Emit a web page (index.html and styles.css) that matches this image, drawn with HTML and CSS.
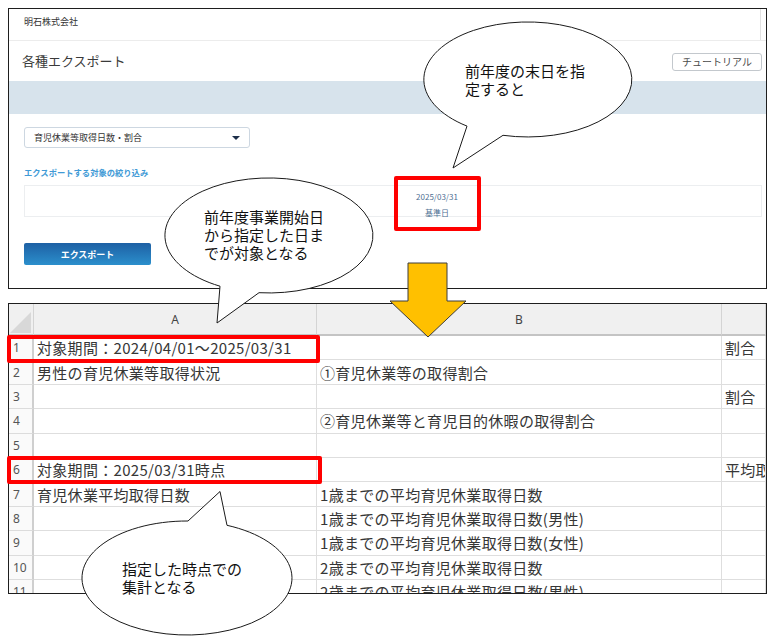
FILE: index.html
```html
<!DOCTYPE html>
<html lang="ja">
<head>
  <meta charset="UTF-8">
  <meta name="viewport" content="width=device-width, initial-scale=1.0">
  <title>各種エクスポート</title>
  <link rel="stylesheet" href="styles.css">
</head>
<body>
  <!-- export screen -->
  <section class="app">
    <div class="company">明石株式会社</div>
    <div class="title-row">
      <h1>各種エクスポート</h1>
      <button class="tutorial">チュートリアル</button>
    </div>
    <div class="band"></div>
    <div class="form">
      <div class="select">
        <span>育児休業等取得日数・割合</span>
        <span class="caret"></span>
      </div>
      <p class="filter-label">エクスポートする対象の絞り込み</p>
      <div class="filter">
        <div class="base-date">
          <span>2025/03/31</span>
          <span>基準日</span>
        </div>
      </div>
      <button class="export">エクスポート</button>
    </div>
  </section>

  <!-- exported workbook -->
  <section class="sheet">
    <div class="grid">
      <div class="corner"><span class="corner-mark"></span></div>
      <div class="col-head">A</div>
      <div class="col-head">B</div>
      <div class="col-head"></div>

      <div class="rn">1</div>
      <div class="cell">対象期間：2024/04/01～2025/03/31</div>
      <div class="cell"></div>
      <div class="cell">割合</div>

      <div class="rn">2</div>
      <div class="cell">男性の育児休業等取得状況</div>
      <div class="cell">①育児休業等の取得割合</div>
      <div class="cell"></div>

      <div class="rn">3</div>
      <div class="cell"></div>
      <div class="cell"></div>
      <div class="cell">割合</div>

      <div class="rn">4</div>
      <div class="cell"></div>
      <div class="cell">②育児休業等と育児目的休暇の取得割合</div>
      <div class="cell"></div>

      <div class="rn">5</div>
      <div class="cell"></div>
      <div class="cell"></div>
      <div class="cell"></div>

      <div class="rn">6</div>
      <div class="cell">対象期間：2025/03/31時点</div>
      <div class="cell"></div>
      <div class="cell">平均取得日数</div>

      <div class="rn">7</div>
      <div class="cell">育児休業平均取得日数</div>
      <div class="cell">1歳までの平均育児休業取得日数</div>
      <div class="cell"></div>

      <div class="rn">8</div>
      <div class="cell"></div>
      <div class="cell">1歳までの平均育児休業取得日数(男性)</div>
      <div class="cell"></div>

      <div class="rn">9</div>
      <div class="cell"></div>
      <div class="cell">1歳までの平均育児休業取得日数(女性)</div>
      <div class="cell"></div>

      <div class="rn">10</div>
      <div class="cell"></div>
      <div class="cell">2歳までの平均育児休業取得日数</div>
      <div class="cell"></div>

      <div class="rn">11</div>
      <div class="cell"></div>
      <div class="cell">2歳までの平均育児休業取得日数(男性)</div>
      <div class="cell"></div>
    </div>
  </section>

  <!-- red highlight frames -->
  <div class="mark mark-date"></div>
  <div class="mark mark-row1"></div>
  <div class="mark mark-row6"></div>

  <!-- speech bubbles and arrow -->
  <svg class="callouts" width="778" height="641" viewBox="0 0 778 641">
    <polygon class="arrow" points="408,263 447,263 447,301 466,301 428,337 390,301 408,301"/>
    <path class="bubble" d="M467 126.1 L453 168 L503 135.3 A104 57.5 0 1 0 467 126.1 Z"/>
    <path class="bubble" d="M220 286.2 L217 323 L259 292.7 A104 57.5 0 1 0 220 286.2 Z"/>
    <path class="bubble" d="M188 521 L220 491.5 L227 525.3 A105 57 0 1 1 188 521 Z"/>
  </svg>

  <p class="note note-top">前年度の末日を指<br>定すると</p>
  <p class="note note-mid">前年度事業開始日<br>から指定した日ま<br>でが対象となる</p>
  <p class="note note-bottom">指定した時点での<br>集計となる</p>
</body>
</html>
```

FILE: styles.css
```css
* {
  box-sizing: border-box;
}

body {
  margin: 0;
  width: 778px;
  height: 641px;
  overflow: hidden;
  position: relative;
  background: #fff;
  color: #333;
  font-family: "Noto Sans CJK JP", "Noto Sans", sans-serif;
}

/* ---------- export screen ---------- */
.app {
  margin: 8px 0 0 8px;
  width: 759px;
  height: 281px;
  border: 1px solid #1e1e1e;
}

.company {
  height: 32px;
  padding-left: 15px;
  border-bottom: 1px solid #ececec;
  box-shadow: inset -5px 0 0 #fff, inset -6px 0 0 #e2e2e2;
  font-size: 9px;
  line-height: 26px;
  color: #333;
}

.title-row {
  height: 40px;
  display: flex;
  align-items: center;
  justify-content: space-between;
  padding: 0 4px 2px 13px;
}

.title-row h1 {
  margin: 0;
  font-size: 13px;
  font-weight: 400;
  color: #3a3a3a;
}

.tutorial {
  width: 90px;
  height: 18px;
  margin-top: 3px;
  padding: 0;
  background: #fff;
  border: 1px solid #c3c8cd;
  border-radius: 3px;
  font-family: inherit;
  font-size: 10px;
  color: #4a4a4a;
}

.band {
  height: 33px;
  background: #d7e3ec;
}

.form {
  padding: 13px 0 0 15px;
}

.select {
  width: 226px;
  height: 21px;
  display: flex;
  align-items: center;
  justify-content: space-between;
  padding: 0 9px 0 9px;
  border: 1px solid #cdd7e1;
  border-radius: 3px;
  font-size: 9px;
  color: #333;
}

.caret {
  width: 0;
  height: 0;
  border-left: 4px solid transparent;
  border-right: 4px solid transparent;
  border-top: 4px solid #1d2f4a;
}

.filter-label {
  margin: 19px 0 0;
  font-size: 8.3px;
  line-height: 10px;
  font-weight: 700;
  color: #3f9ad6;
}

.filter {
  height: 32px;
  margin: 8px 4px 0 0;
  padding-top: 3px;
  border: 1px solid #eceef0;
}

.base-date {
  width: 80px;
  margin-left: 372px;
  display: flex;
  flex-direction: column;
  align-items: center;
  font-size: 8px;
  line-height: 16px;
  color: #4d6e92;
}

.export {
  width: 127px;
  height: 22px;
  margin-top: 26px;
  padding: 0;
  border: none;
  border-radius: 2px;
  background: linear-gradient(#1e60a4, #2b8fcc);
  color: #fff;
  font-family: inherit;
  font-size: 9px;
  font-weight: 700;
}

/* ---------- workbook ---------- */
.sheet {
  margin: 14px 0 0 8px;
  width: 759px;
  height: 291px;
  border: 1px solid #1e1e1e;
  overflow: hidden;
}

.grid {
  display: grid;
  grid-template-columns: 25px 283px 405px 1fr;
  grid-template-rows: 32px;
  grid-auto-rows: 24.4px;
}

.corner,
.col-head {
  background: #f0f0f0;
  border-right: 1px solid #d4d4d4;
  border-bottom: 2px solid #c4c4c4;
}

.corner {
  display: flex;
  align-items: flex-end;
  justify-content: flex-end;
  padding: 0 2px 1px 0;
}

.corner-mark {
  width: 0;
  height: 0;
  border-left: 21px solid transparent;
  border-bottom: 21px solid #d8d8d8;
}

.col-head {
  display: flex;
  align-items: center;
  justify-content: center;
  font-family: "Noto Sans", sans-serif;
  font-size: 12px;
  color: #444;
}

.rn {
  display: flex;
  align-items: center;
  padding-left: 4px;
  background: #fafafa;
  border-right: 2px solid #cfcfcf;
  border-bottom: 1px solid #dcdcdc;
  font-family: "Noto Sans", sans-serif;
  font-size: 12px;
  color: #555;
}

.cell {
  display: flex;
  align-items: center;
  padding-left: 3px;
  border-right: 1px solid #dedede;
  border-bottom: 1px solid #dedede;
  white-space: nowrap;
  overflow: hidden;
  font-size: 15px;
  letter-spacing: 0.3px;
  color: #363636;
}

/* ---------- annotations ---------- */
.mark {
  position: absolute;
  border: 4px solid #ff0000;
  border-radius: 2px;
}

.mark-date {
  left: 394px;
  top: 176px;
  width: 87px;
  height: 55px;
}

.mark-row1 {
  left: 7px;
  top: 335px;
  width: 313px;
  height: 28px;
}

.mark-row6 {
  left: 7px;
  top: 456px;
  width: 315px;
  height: 28px;
}

.callouts {
  position: absolute;
  left: 0;
  top: 0;
}

.arrow {
  fill: #ffc000;
  stroke: #3c3c3c;
  stroke-width: 1;
}

.bubble {
  fill: #fff;
  stroke: #1a1a1a;
  stroke-width: 1;
}

.note {
  position: absolute;
  margin: 0;
  font-size: 15px;
  line-height: 18px;
  color: #111;
}

.note-top {
  left: 465px;
  top: 62px;
}

.note-mid {
  left: 204px;
  top: 208px;
}

.note-bottom {
  left: 122px;
  top: 560px;
}
```
